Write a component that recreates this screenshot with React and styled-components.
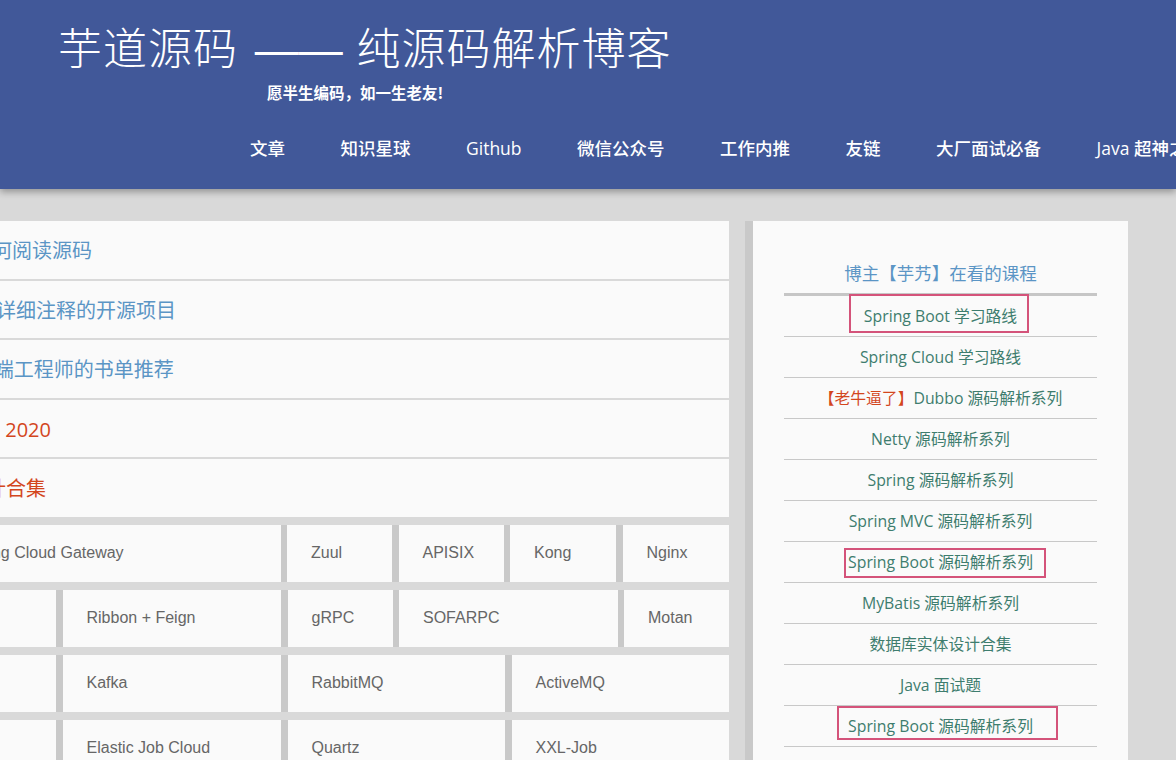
import React from 'react'
import styled, { createGlobalStyle } from 'styled-components'

const GlobalStyle = createGlobalStyle`
  html, body {
    margin: 0;
    padding: 0;
  }
  body {
    width: 1176px;
    height: 760px;
    overflow: hidden;
    background: #d9d9d9;
    font-family: "Open Sans", "Noto Sans CJK SC", sans-serif;
  }
  ul {
    list-style: none;
    margin: 0;
    padding: 0;
  }
`

const Header = styled.header`
  position: relative;
  z-index: 1;
  height: 189px;
  box-sizing: border-box;
  padding: 18px 0 0 58px;
  background: #415899;
  box-shadow: 0 3px 7px rgba(0, 0, 0, 0.32);
  color: #fff;
  overflow: hidden;
  white-space: nowrap;
`

const Title = styled.h1`
  height: 56px;
  margin: 0;
  font-family: "Noto Sans CJK SC", sans-serif;
  font-weight: 300;
  font-size: 44px;
  line-height: 56px;
  letter-spacing: 1px;
`

const Dash = styled.span`
  font-family: "Liberation Sans", sans-serif;
  font-weight: 400;
  line-height: 0;
  letter-spacing: 0;
  margin: 0 3px 0 6px;
`

const Motto = styled.p`
  margin: 8px 0 0 209px;
  font-family: "Noto Sans CJK SC", sans-serif;
  font-size: 15.5px;
  line-height: 20px;
  font-weight: 700;
`

const Nav = styled.nav`
  display: flex;
  gap: 55.5px;
  margin: 34px 0 0 192px;
`

const NavLink = styled.a`
  flex: none;
  color: #fff;
  text-decoration: none;
  font-size: 17.5px;
  line-height: 24px;
  font-weight: 500;
`

const Main = styled.main`
  display: flex;
  align-items: flex-start;
  gap: 16px;
  margin: 32px 0 0 -160px;
`

const Content = styled.div`
  flex: none;
  width: 889px;
  display: flex;
  flex-direction: column;
  gap: 8px;
`

const LinkList = styled.ul`
  display: flex;
  flex-direction: column;
  gap: 2px;
`

const LinkRow = styled.li`
  height: 57.5px;
  display: flex;
  align-items: center;
  padding-left: ${p => p.$pad}px;
  background: #fafafa;
  font-size: 20px;
  white-space: nowrap;
  color: ${p => (p.$hot ? '#d3461d' : '#5b95c5')};
`

const Table = styled.div`
  display: flex;
  flex-direction: column;
  gap: 7.5px;
`

const TableRow = styled.div`
  height: 57.5px;
  display: flex;
  gap: 6.5px;
  background: #c9c9c9;
`

const Cell = styled.div`
  flex: ${p => (p.$w ? `0 0 ${p.$w}px` : '1 1 0')};
  box-sizing: border-box;
  display: flex;
  align-items: center;
  padding-left: 24px;
  background: #fafafa;
  font-family: "Liberation Sans", sans-serif;
  font-size: 16px;
  color: #666;
  white-space: nowrap;
  overflow: hidden;
`

const Sidebar = styled.aside`
  flex: none;
  width: 313px;
  min-height: 620px;
  padding: 40px 31px 0;
  border-left: 8px solid #c9c9c9;
  background: #fafafa;
`

const SideTitle = styled.h3`
  margin: 0;
  padding-bottom: 8px;
  border-bottom: 3px solid #c6c6c6;
  text-align: center;
  font-weight: 400;
  font-size: 17.5px;
  line-height: 24px;
  color: #5b95c5;
`

const Course = styled.li`
  height: 40px;
  display: flex;
  align-items: center;
  justify-content: center;
  border-bottom: 1px solid #c8c8c8;
  font-size: 15.8px;
  color: #3e7d6e;
  white-space: nowrap;
`

const Label = styled.span`
  position: relative;
  line-height: 20px;
`

const Hot = styled.span`
  color: #d3461d;
`

// hand-drawn annotation frame lying over a course link
const Mark = styled.span`
  position: absolute;
  top: ${p => p.$box[0]}px;
  right: ${p => p.$box[1]}px;
  bottom: ${p => p.$box[2]}px;
  left: ${p => p.$box[3]}px;
  border: 2.5px solid #d4537a;
  pointer-events: none;
`

const navItems = ['文章', '知识星球', 'Github', '微信公众号', '工作内推', '友链', '大厂面试必备', 'Java 超神之路']

const links = [
  { text: '如何阅读源码', pad: 132 },
  { text: '带中文详细注释的开源项目', pad: 96 },
  { text: 'Java 后端工程师的书单推荐', pad: 91 },
  { text: '年度总结 2020', pad: 80, hot: true },
  { text: '数据库实体设计合集', pad: 26, hot: true },
]

const rows = [
  [['网关', 93], ['Spring Cloud Gateway', 341], ['Zuul', 105], ['APISIX', 105], ['Kong', 106], ['Nginx']],
  [['Dubbo', 216], ['Ribbon + Feign', 218.5], ['gRPC', 105], ['SOFARPC', 218.5], ['Motan']],
  [['RocketMQ', 216], ['Kafka', 218.5], ['RabbitMQ', 217.5], ['ActiveMQ']],
  [['Elastic Job', 216], ['Elastic Job Cloud', 218.5], ['Quartz', 217.5], ['XXL-Job']],
]

const courses = [
  { text: 'Spring Boot 学习路线', mark: [-12, -12, -7, -15] },
  { text: 'Spring Cloud 学习路线' },
  { text: 'Dubbo 源码解析系列', hot: '【老牛逼了】' },
  { text: 'Netty 源码解析系列' },
  { text: 'Spring 源码解析系列' },
  { text: 'Spring MVC 源码解析系列' },
  { text: 'Spring Boot 源码解析系列', mark: [-4, -13, -6, -4] },
  { text: 'MyBatis 源码解析系列' },
  { text: '数据库实体设计合集' },
  { text: 'Java 面试题' },
  { text: 'Spring Boot 源码解析系列', mark: [-10, -25, -4, -11] },
]

export default function App() {
  return (
    <>
      <GlobalStyle />
      <Header>
        <Title>芋道源码 <Dash>——</Dash> 纯源码解析博客</Title>
        <Motto>愿半生编码，如一生老友!</Motto>
        <Nav>
          {navItems.map(item => (
            <NavLink key={item} href="#">{item}</NavLink>
          ))}
        </Nav>
      </Header>
      <Main>
        <Content>
          <LinkList>
            {links.map(l => (
              <LinkRow key={l.text} $pad={l.pad} $hot={l.hot}>{l.text}</LinkRow>
            ))}
          </LinkList>
          <Table>
            {rows.map((row, i) => (
              <TableRow key={i}>
                {row.map(([text, w]) => (
                  <Cell key={text} $w={w}>{text}</Cell>
                ))}
              </TableRow>
            ))}
          </Table>
        </Content>
        <Sidebar>
          <SideTitle>博主【芋艿】在看的课程</SideTitle>
          <ul>
            {courses.map((c, i) => (
              <Course key={i}>
                <Label>
                  {c.hot && <Hot>{c.hot}</Hot>}
                  {c.text}
                  {c.mark && <Mark $box={c.mark} />}
                </Label>
              </Course>
            ))}
          </ul>
        </Sidebar>
      </Main>
    </>
  )
}
